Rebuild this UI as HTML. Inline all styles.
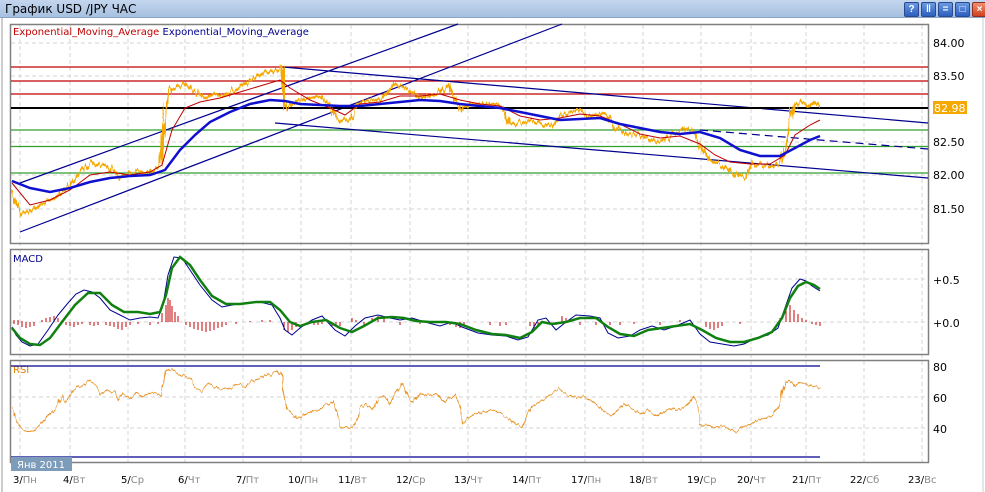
<!DOCTYPE html>
<html><head><meta charset="utf-8"><style>
body{margin:0;width:985px;height:492px;overflow:hidden;background:#fff;font-family:"Liberation Sans","DejaVu Sans",sans-serif;}
.tb{position:absolute;left:0;top:0;width:985px;height:17px;background:linear-gradient(#c4d6ee,#a7c0e0);border-bottom:1px solid #8aa4c8;}
.tb span{position:absolute;left:5px;top:2px;font-size:12px;color:#000;font-family:"DejaVu Sans",sans-serif;}
.btn{position:absolute;top:2px;width:13px;height:13px;border-radius:2px;background:linear-gradient(#6a9ae0,#2d5fc0);border:1px solid #2a4a90;color:#fff;font-size:10px;line-height:13px;text-align:center;font-weight:bold}
</style></head><body>
<div class="tb"><span>График USD /JPY  ЧАС</span>
<div class="btn" style="left:904px">?</div><div class="btn" style="left:921px">‖</div><div class="btn" style="left:938px">=</div><div class="btn" style="left:955px">□</div><div class="btn" style="left:972px;background:linear-gradient(#f09070,#d04020);border-color:#903020">×</div></div>
<svg width="985" height="492" style="position:absolute;left:0;top:0" font-family="DejaVu Sans, sans-serif">
<defs>
<filter id="jit" x="-5%" y="-20%" width="110%" height="140%">
<feTurbulence type="fractalNoise" baseFrequency="0.45 0.02" numOctaves="2" seed="3" result="n"/>
<feDisplacementMap in="SourceGraphic" in2="n" scale="10" xChannelSelector="R" yChannelSelector="G"/>
</filter>
<filter id="jit2" x="-5%" y="-20%" width="110%" height="140%">
<feTurbulence type="fractalNoise" baseFrequency="0.3 0.05" numOctaves="2" seed="7" result="n"/>
<feDisplacementMap in="SourceGraphic" in2="n" scale="6" xChannelSelector="R" yChannelSelector="G"/>
</filter>
</defs>
<line x1="2" y1="18" x2="2" y2="492" stroke="#999"/>
<line x1="983" y1="18" x2="983" y2="492" stroke="#ccc"/>
<g stroke="#d4d4d4" stroke-dasharray="4,3">
<path d="M20 25V462M70 25V462M128 25V462M185 25V462M243 25V462M301 25V462M351 25V462M410 25V462M468 25V462M526 25V462M585 25V462M643 25V462M701 25V462M751 25V462M806 25V462M864 25V462M922 25V462"/>
<path d="M11 43H928M11 76H928M11 142H928M11 175H928M11 209H928M11 279H928M11 322H928M11 397H928M11 428H928"/>
</g>
<g fill="none" stroke="#808080" stroke-width="1.5">
<rect x="10.5" y="24.5" width="918" height="219"/>
<rect x="10.5" y="249.5" width="918" height="105"/>
<rect x="10.5" y="360.5" width="918" height="102"/>
</g>
<text x="13" y="35" font-size="10" fill="#c00000">Exponential_Moving_Average <tspan fill="#000090">Exponential_Moving_Average</tspan></text>
<g stroke-width="1.2">
<path d="M11 67H928M11 81H928M11 94H928" stroke="#c00000"/>
<path d="M11 130H928M11 146.5H928M11 173H928" stroke="#30a030"/>
<path d="M20 183L458 24M20 232L562 24M283 67L928 123M275 123L928 178" stroke="#000090"/>
<path d="M700 130L928 149" stroke="#000090" stroke-dasharray="8,5"/>
<path d="M11 108H928" stroke="#000" stroke-width="2"/>
</g>
<polyline filter="url(#jit)" fill="none" stroke="#f5a800" stroke-width="2.5" stroke-linejoin="round" points="12,190 16,205 20,215 28,212 35,208 45,202 55,198 65,190 72,182 82,170 92,162 100,165 110,168 118,178 125,174 135,172 150,172 160,166 165,112 170,90 176,88 185,84 195,92 205,98 215,94 225,96 235,90 245,84 255,78 265,72 275,70 282,66 285,108 292,104 300,100 310,98 320,96 328,104 335,118 345,122 352,118 358,104 368,100 380,100 388,92 395,84 405,88 412,92 420,98 430,96 440,92 448,84 455,100 462,110 470,104 482,104 492,104 502,106 510,124 520,122 530,120 540,124 550,126 560,116 570,112 580,110 590,116 600,114 608,116 616,128 625,134 635,134 645,138 655,142 665,140 675,132 685,128 695,134 700,146 710,160 720,164 730,170 740,178 746,176 752,164 760,164 770,166 780,164 785,150 790,120 795,104 802,102 808,106 815,102 820,106"/>
<polyline fill="none" stroke="#c00000" stroke-width="1" points="12,183 30,205 50,200 70,190 90,175 110,172 130,175 150,172 162,165 172,130 185,108 200,102 220,98 240,92 260,86 280,80 290,88 310,100 330,108 345,115 360,104 380,102 400,96 420,96 440,94 460,100 480,104 500,106 520,116 540,120 560,118 580,114 600,116 620,124 640,134 660,138 680,136 700,144 715,155 730,162 750,164 770,164 785,155 795,135 810,125 820,120"/>
<polyline fill="none" stroke="#1010d0" stroke-width="2.5" points="12,181 30,188 50,192 70,188 90,182 110,178 130,176 150,175 165,170 180,150 195,135 210,122 230,112 250,104 270,100 285,101 300,104 320,105 340,106 360,106 380,104 400,102 420,100 440,101 460,104 480,106 500,108 520,112 540,116 560,120 580,119 600,118 620,124 640,128 660,132 680,134 700,132 720,138 740,150 760,156 780,156 795,148 810,140 820,136"/>
<text x="933" y="47" font-size="11" fill="#000">84.00</text>
<text x="933" y="80" font-size="11" fill="#000">83.50</text>
<rect x="933" y="101" width="34" height="13" fill="#f5a800"/>
<text x="934" y="112" font-size="11" fill="#fff">82.98</text>
<text x="933" y="146" font-size="11" fill="#000">82.50</text>
<text x="933" y="179" font-size="11" fill="#000">82.00</text>
<text x="933" y="213" font-size="11" fill="#000">81.50</text>
<text x="13" y="262" font-size="10" fill="#000090">MACD</text>
<g stroke="#c00000" stroke-width="1" shape-rendering="crispEdges">
<path d="M14 320v4M18 320v5M22 321v6M26 322v6M30 322v5M34 322v4M42 320v2M46 318v4M50 317v5M54 316v6M58 318v4M62 320v2M66 322v3M70 322v4M74 322v5M78 322v3M82 322v2M90 322v3M94 322v4M98 322v3M106 322v3M110 322v4M114 322v5M118 322v7M122 322v8M126 322v5M130 322v3M138 322v2M150 322v3M158 322v2M162 313v9M166 305v17M168 298v24M170 300v22M172 306v16M175 312v10M178 316v6M186 322v3M190 322v5M194 322v7M198 322v8M202 322v9M206 322v10M210 322v9M214 322v8M218 322v6M222 322v5M226 322v3M236 322v2M250 321v1M262 320v2M270 320v2M284 322v8M288 322v10M292 322v8M296 322v5M314 322v3M318 322v3M322 322v2M332 322v4M336 322v5M340 322v4M352 318v4M356 320v2M364 322v3M372 318v4M378 316v6M384 318v4M400 322v3M420 322v2M450 322v3M456 322v5M460 322v6M464 322v4M490 322v3M500 322v4M506 322v3M530 322v4M534 322v6M538 322v4M556 322v3M562 316v6M566 318v4M580 322v3M596 322v3M610 322v3M620 322v3M634 322v2M660 322v3M680 320v2M706 322v5M710 322v7M714 322v8M718 322v6M722 322v4M740 322v2M780 318v4M786 310v12M790 305v17M794 310v12M798 314v8M802 318v4M806 320v2M812 322v2M816 322v3M820 322v4"/>
</g>
<polyline fill="none" stroke="#000090" stroke-width="1" points="12,327 16,335 22,342 30,346 38,344 48,330 58,315 68,303 76,294 84,290 92,292 100,298 110,310 120,315 130,320 140,318 150,317 158,318 163,305 168,275 174,257 182,258 190,270 200,285 212,300 222,307 232,305 244,303 260,302 272,305 280,318 285,330 292,335 300,328 312,320 322,316 335,330 345,336 355,326 365,318 378,315 390,318 400,320 412,318 425,322 440,326 452,322 462,327 478,333 492,335 506,336 518,340 528,337 538,320 546,318 556,330 566,322 576,315 590,316 600,318 608,333 618,338 630,336 640,330 652,326 664,330 676,326 690,320 700,334 710,342 722,344 734,346 744,344 756,338 768,335 778,328 786,305 792,288 800,279 806,281 812,286 820,291"/>
<polyline fill="none" stroke="#108010" stroke-width="2.5" points="12,328 20,338 30,344 40,345 50,338 62,322 75,305 88,293 100,293 112,305 124,312 138,312 150,314 160,312 166,295 172,268 180,257 190,265 200,280 212,296 226,304 240,304 256,302 270,302 280,310 290,322 300,326 312,322 326,320 340,328 352,332 364,326 378,318 392,317 404,318 416,321 430,322 446,322 460,324 476,330 492,334 506,335 520,338 532,332 542,322 552,324 566,322 580,318 596,318 608,327 620,334 634,336 648,330 662,328 676,326 690,324 702,330 716,338 730,342 744,342 758,338 772,332 782,318 790,298 798,286 806,282 814,285 820,289"/>
<text x="933" y="284" font-size="11" fill="#000">+0.5</text>
<text x="933" y="327" font-size="11" fill="#000">+0.0</text>
<text x="13" y="373" font-size="10" fill="#e08000">RSI</text>
<path d="M11 366H820M11 457H820" stroke="#000090" stroke-width="1.2"/>
<polyline filter="url(#jit2)" fill="none" stroke="#e89020" stroke-width="1" points="12,408 16,420 20,428 26,431 34,431 40,425 46,418 52,412 58,404 62,396 66,402 72,392 78,386 84,384 90,380 95,385 100,395 106,390 114,392 118,400 122,394 130,399 136,392 142,397 150,393 158,394 162,396 166,370 170,368 176,374 182,376 190,378 196,388 202,390 208,384 214,386 222,390 230,388 238,384 246,386 254,380 262,378 270,374 278,370 283,378 285,410 290,412 296,418 302,416 310,412 320,410 328,404 333,402 337,414 340,426 346,428 352,428 356,422 360,408 366,404 372,410 378,398 384,396 390,404 396,392 402,384 408,398 414,402 420,392 428,396 436,394 444,402 450,398 456,396 460,410 462,424 468,418 476,414 484,412 492,410 500,412 508,418 516,424 522,426 528,414 534,406 540,402 546,398 552,392 558,388 564,392 570,396 576,398 582,396 590,400 598,405 606,412 612,416 618,410 624,404 632,408 640,414 648,410 656,416 664,412 672,408 680,410 688,404 694,396 698,408 700,426 706,424 714,428 722,426 730,430 738,432 744,426 750,424 758,420 766,418 772,415 778,408 782,396 786,382 790,380 794,386 800,382 806,384 812,386 820,388"/>
<text x="933" y="371" font-size="11" fill="#000">80</text>
<text x="933" y="402" font-size="11" fill="#000">60</text>
<text x="933" y="433" font-size="11" fill="#000">40</text>
<rect x="11" y="457" width="61" height="14" fill="#7d9cba"/>
<text x="17" y="468" font-size="10" fill="#fff">Янв 2011</text>
<g font-size="10" fill="#000">
<text x="13" y="483">3/<tspan fill="#888">Пн</tspan></text>
<text x="63" y="483">4/<tspan fill="#888">Вт</tspan></text>
<text x="121" y="483">5/<tspan fill="#888">Ср</tspan></text>
<text x="178" y="483">6/<tspan fill="#888">Чт</tspan></text>
<text x="236" y="483">7/<tspan fill="#888">Пт</tspan></text>
<text x="288" y="483">10/<tspan fill="#888">Пн</tspan></text>
<text x="338" y="483">11/<tspan fill="#888">Вт</tspan></text>
<text x="396" y="483">12/<tspan fill="#888">Ср</tspan></text>
<text x="454" y="483">13/<tspan fill="#888">Чт</tspan></text>
<text x="512" y="483">14/<tspan fill="#888">Пт</tspan></text>
<text x="571" y="483">17/<tspan fill="#888">Пн</tspan></text>
<text x="629" y="483">18/<tspan fill="#888">Вт</tspan></text>
<text x="687" y="483">19/<tspan fill="#888">Ср</tspan></text>
<text x="737" y="483">20/<tspan fill="#888">Чт</tspan></text>
<text x="792" y="483">21/<tspan fill="#888">Пт</tspan></text>
<text x="850" y="483">22/<tspan fill="#888">Сб</tspan></text>
<text x="908" y="483">23/<tspan fill="#888">Вс</tspan></text>
</g>
</svg>
</body></html>
